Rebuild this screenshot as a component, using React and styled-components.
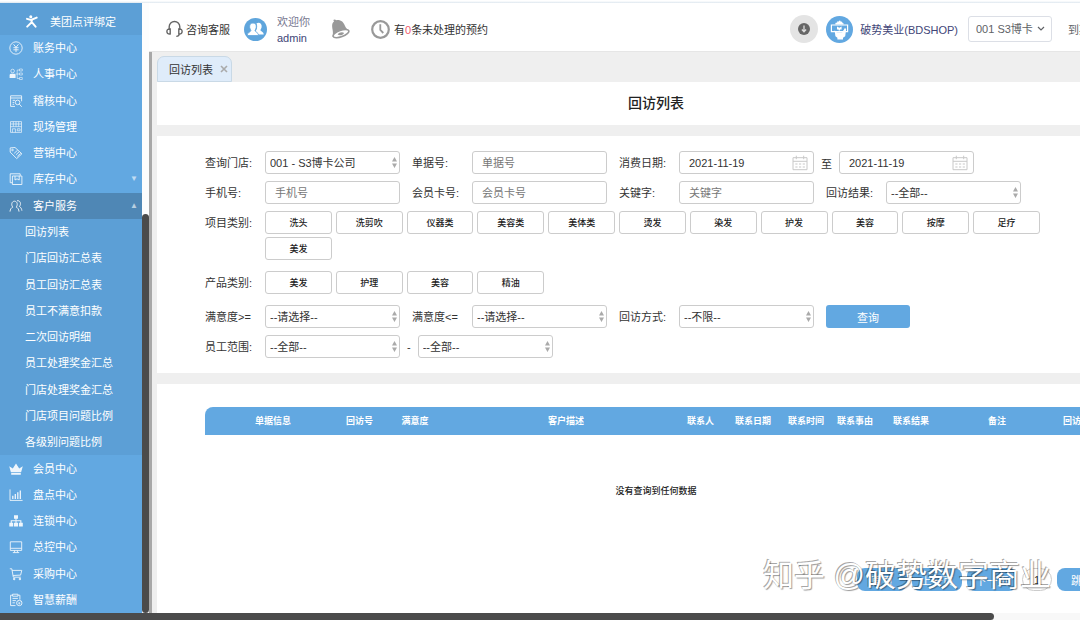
import React, { useState } from "react";
import styled, { createGlobalStyle } from "styled-components";

const GlobalStyle = createGlobalStyle`
  * {
    box-sizing: border-box;
  }
  body {
    margin: 0;
    background: #fff;
  }
  body, button, input, select {
    font-family: "Liberation Sans", "Noto Sans CJK SC", sans-serif;
    font-size: 11px;
    color: #333;
  }
`;

const Page = styled.div`
  display: flex;
  flex-direction: column;
  height: 100vh;
  min-height: 600px;
  overflow: hidden;
  position: relative;
`;

const TopLine = styled.div`
  flex: 0 0 3px;
  background: linear-gradient(#fff 1px, #dde6ee);
`;

const Body = styled.div`
  flex: 1;
  display: flex;
  min-height: 0;
`;

/* sidebar */

const Sidebar = styled.nav`
  flex: 0 0 142px;
  display: flex;
  flex-direction: column;
  background: #62a8e1;
`;

const BindLink = styled.a`
  flex: 0 0 32px;
  display: flex;
  align-items: center;
  gap: 12px;
  padding: 4px 0 0 26px;
  background: #5c9fd6;
  color: #fff;
  text-decoration: none;
`;

const Menu = styled.ul`
  flex: ${(p) => p.$rows};
  display: flex;
  flex-direction: column;
  list-style: none;
  margin: 0;
  padding: 0;
  background: ${(p) => (p.$sub ? "#5c9fd6" : "transparent")};
`;

const MenuItem = styled.li`
  flex: 1;
  display: flex;
  background: ${(p) => (p.$active ? "#4f87b5" : "transparent")};
`;

const MenuLink = styled.a`
  flex: 1;
  display: flex;
  align-items: center;
  gap: 10px;
  padding: 0 4px 0 ${(p) => (p.$sub ? "25px" : "9px")};
  color: #fff;
  line-height: 16px;
  text-decoration: none;
  white-space: nowrap;
  & > svg {
    flex: none;
    opacity: 0.9;
  }
`;

const Arrow = styled.span`
  margin-left: auto;
  font-size: 8px;
  opacity: 0.6;
`;

const ScrollTrack = styled.div`
  flex: 0 0 7px;
  display: flex;
  flex-direction: column;
  background: #fdfdfd;
`;

const ScrollSpace = styled.div`
  flex: 211;
`;

const ScrollThumb = styled.div`
  flex: 399;
  border-radius: 4px;
  background: #4b4b4b;
`;

const HScroll = styled.div`
  flex: 0 0 7px;
  background: #f8f8f8;
`;

const HThumb = styled.div`
  width: 92%;
  height: 7px;
  border-radius: 0 4px 4px 0;
  background: #4b4b4b;
`;

/* header */

const Main = styled.div`
  flex: 1;
  min-width: 0;
  display: flex;
  flex-direction: column;
`;

const Header = styled.header`
  flex: 0 0 49px;
  display: flex;
  align-items: center;
  padding: 4px 0 0 17px;
  border-bottom: 1px solid #e6e6e6;
  white-space: nowrap;
  overflow: hidden;
`;

const HeaderLink = styled.a`
  display: flex;
  align-items: center;
  gap: ${(p) => p.$gap || 4}px;
  margin-right: ${(p) => p.$space}px;
  color: ${(p) => p.$color || "#333"};
  text-decoration: none;
`;

const Welcome = styled.div`
  padding-top: 2px;
  color: #77778f;
  line-height: 16px;
  & strong {
    display: block;
    font-weight: normal;
    color: #414577;
  }
`;

const Count = styled.span`
  color: #f05a6e;
`;

const Account = styled.div`
  display: flex;
  align-items: center;
  margin-left: auto;
`;

const RoundButton = styled.button`
  display: flex;
  align-items: center;
  justify-content: center;
  width: 28px;
  height: 28px;
  margin-right: 8px;
  padding: 0;
  border: 0;
  border-radius: 50%;
  background: #e4e4e4;
`;

const Picker = styled.div`
  display: grid;
  align-items: center;
  flex: none;
  width: ${(p) => p.$width || 135}px;
  & > * {
    grid-area: 1 / 1;
  }
  & > svg {
    justify-self: end;
    margin-right: ${(p) => p.$inset || 2}px;
    pointer-events: none;
  }
`;

const ShopSelect = styled.select`
  appearance: none;
  width: 100%;
  height: 26px;
  padding: 0 7px;
  border: 1px solid #dcdfe6;
  border-radius: 3px;
  background: #fff;
  color: #606266;
`;

const HeaderTail = styled.span`
  flex: 0 0 12px;
  min-width: 0;
  margin-left: 16px;
  color: #606266;
`;

/* content */

const Content = styled.main`
  flex: 1;
  min-height: 0;
  display: flex;
  flex-direction: column;
  overflow: hidden;
  padding-left: 5px;
  border-left: 3px solid #a8a8a8;
  background: #efefef;
`;

const Tabs = styled.div`
  flex: 0 0 30px;
  display: flex;
  align-items: flex-end;
`;

const Tab = styled.div`
  display: flex;
  align-items: center;
  gap: 7px;
  width: 75px;
  height: 26px;
  padding-left: 11px;
  border: 1px solid #c9d9e6;
  border-radius: 7px 7px 0 0;
  background: #dfecfa;
  white-space: nowrap;
`;

const CloseButton = styled.button`
  display: flex;
  padding: 0;
  border: 0;
  background: none;
`;

const Sheet = styled.section`
  flex: ${(p) => (p.$grow ? 1 : "none")};
  min-width: 998px;
  margin-bottom: ${(p) => (p.$grow ? 0 : 11)}px;
  padding: ${(p) => p.$pad || "0"};
  background: #fff;
`;

const Title = styled.h1`
  margin: 0;
  font-size: 14px;
  font-weight: 500;
  line-height: 43px;
  text-align: center;
  color: #222;
`;

const Form = styled.form`
  display: flex;
  flex-direction: column;
  gap: 7px;
`;

const Row = styled.div`
  display: flex;
  align-items: flex-start;
  min-height: 23px;
  margin-bottom: ${(p) => (p.$loose ? 4 : 0)}px;
`;

const Field = styled.div`
  display: flex;
  align-items: center;
  flex: none;
  margin-right: 12px;
`;

const Label = styled.label`
  flex: 0 0 60px;
  padding-top: 1px;
  line-height: 22px;
  white-space: nowrap;
`;

const Divider = styled.span`
  margin: 0 7px;
`;

const Input = styled.input`
  width: 135px;
  height: 23px;
  padding: 0 9px;
  border: 1px solid #ccc;
  border-radius: 3px;
  background: #fff;
  outline: none;
  &::placeholder {
    color: #777;
  }
`;

const Select = styled.select`
  appearance: none;
  width: 100%;
  height: 23px;
  padding: 0 4px;
  border: 1px solid #ccc;
  border-radius: 3px;
  background: #fff;
`;

const Chips = styled.div`
  flex: 0 0 775px;
  display: grid;
  grid-template-columns: repeat(11, 1fr);
  gap: 3px 4px;
`;

const Chip = styled.button`
  height: 23px;
  padding: 0;
  border: 1px solid ${(p) => (p.$on ? "#62a8e1" : "#ccc")};
  border-radius: 3px;
  background: #fff;
  color: #222;
  font-size: 9px;
  font-weight: 500;
`;

const BlueButton = styled.button`
  flex: none;
  width: ${(p) => p.$width}px;
  height: 23px;
  padding: 0;
  border: 0;
  border-radius: ${(p) => p.$radius || 3}px;
  background: #62a8e1;
  color: #fff;
`;

const Table = styled.table`
  width: 100%;
  table-layout: fixed;
  border-collapse: collapse;
  border-radius: 8px 8px 0 0;
  overflow: hidden;
  font-size: 9px;
`;

const Th = styled.th`
  height: 28px;
  padding: 0 0 2px;
  background: #62a8e1;
  color: #fff;
  white-space: nowrap;
`;

const Empty = styled.td`
  height: 112px;
  padding: 0 0 2px;
  color: #222;
  font-weight: 500;
  text-align: center;
`;

const Pager = styled.div`
  display: flex;
  justify-content: flex-end;
  gap: 5px;
  margin-top: 21px;
`;

const PageInput = styled.input`
  width: 30px;
  height: 23px;
  padding: 0;
  border: 1px solid #ccc;
  border-radius: 12px;
  background: #fff;
  text-align: center;
`;

const Watermark = styled.div`
  position: absolute;
  right: 29px;
  bottom: 22px;
  color: #fff;
  font-size: 31px;
  line-height: 44px;
  white-space: pre;
  text-shadow: -1px -1px 0 rgba(0, 0, 0, 0.35), 1px 1px 1px rgba(0, 0, 0, 0.4);
  pointer-events: none;
`;

/* icons */

const Line = ({ children }) => (
  <svg
    width="14"
    height="14"
    viewBox="0 0 14 14"
    fill="none"
    stroke="#fff"
    strokeWidth="0.9"
    aria-hidden="true"
  >
    {children}
  </svg>
);

const Solid = ({ d }) => (
  <svg width="14" height="14" viewBox="0 0 14 14" fill="#fff" aria-hidden="true">
    <path d={d} />
  </svg>
);

const icons = {
  money: (
    <Line>
      <circle cx="7" cy="7" r="6.2" />
      <path d="M4.5 3.3 7 6.3l2.5-3M7 6.3v4.8M4.4 6.7h5.2M4.4 8.8h5.2" />
    </Line>
  ),
  staff: (
    <Line>
      <circle cx="3.6" cy="4" r="1.8" strokeWidth="0.7" />
      <path d="M.6 11V8q0-1.200 1.500-1.200h3Q6.600 6.800 6.600 8v3z" fill="#fff" stroke="none" />
      <path
        d="M8.2 3v8.500M8.200 3h2.300M6.600 7h3.900M8.200 11.500h2.300M10.500 2h2.800v2h-2.800zM10.500 6h2.800v2h-2.800zM10.500 10.500h2.800v2h-2.800z"
        strokeWidth="0.6"
      />
    </Line>
  ),
  audit: (
    <Line>
      <path d="M6 12.4H1.6V1.8h11v5.5M1.6 4h11M3.6 6.3h2.6M3.6 8.4h1.6M3.6 10.3h1.6" />
      <circle cx="8.6" cy="8.4" r="2.3" />
      <path d="m10.3 10.1 2.4 2.7" />
    </Line>
  ),
  shop: (
    <Line>
      <path
        d="M1.5 1.6h11v10.8h-11zM1.5 4h11M1.5 6.7h11M4.3 1.6v5M7 1.6v5M9.7 1.6v5M3.4 12.4V8.8h3v3.6M8.3 8.8h2.8v2H8.3z"
        strokeWidth="0.7"
      />
    </Line>
  ),
  tag: (
    <Line>
      <path d="M1.200 1.900v4.200l6.500 6.500 5.200-4.800L6 1.500z" />
      <circle cx="3.500" cy="4" r=".8" />
      <path d="m5.200 7.300 3.300-3M6.900 8.800l3.200-3M8.400 10.300l3.200-2.900" />
    </Line>
  ),
  stock: (
    <Line>
      <path d="M3.4 10.7H1.2V1.8h10v2M3.4 4h9.5v8.5H3.4zM6 4v4l2-1.2L10.2 8V4" />
    </Line>
  ),
  users: (
    <Line>
      <path
        d="M1 12.6c.2-2.5 1.3-3.8 2.8-4.5C1.9 6 2.7 2.2 5.5 2.2s3.6 3.8 1.7 5.9c1.6.7 2.6 2 2.8 4.500M8 1.800c3.200-.8 4.600 3.200 2.400 5.700 1.500.8 2.300 2.400 2.500 4.200"
        strokeWidth="1"
      />
    </Line>
  ),
  crown: (
    <Solid d="M.2 4.200 3.800 6.600 7 1.400l3.200 5.200 3.600-2.400-1.700 6.100H1.900zM2.200 11h9.600v1.700H2.200z" />
  ),
  chart: (
    <Line>
      <path d="M1 1.4v11h12.6" />
      <path d="M3.8 11V7.8M6.3 11V6M8.8 11V4.3M11.3 11V2.4" strokeWidth="1.3" />
    </Line>
  ),
  tree: (
    <Solid d="M5 1.200h4v3.600H7.500v1.500h4.900v2.500h1.400v3.700h-3.900V8.800h1.400V7.300H7.500v1.500H9v3.700H5V8.800h1.500V7.300H2.800v1.500h1.400v3.700H.3V8.800h1.400V6.300h4.800V4.800H5z" />
  ),
  monitor: (
    <Line>
      <path d="M1.3 1.8h11.4v8.6H1.3zM1.3 8.3h11.4M5.6 10.4v2M8.4 10.4v2M3.8 12.6h6.4" />
    </Line>
  ),
  cart: (
    <Line>
      <path d="M.8 1.8h2l1.5 8.4h7.5M3.1 3.4h9.7l-1.2 4.7-7.5.4" />
      <circle cx="5.2" cy="12" r=".8" fill="#fff" />
      <circle cx="10.9" cy="12" r=".8" fill="#fff" />
    </Line>
  ),
  pay: (
    <Line>
      <path d="M6.5 12.6H1.6V2.2h2M8.9 2.2h2v4.4M3.6 1.2h5.3v2H3.6zM3.5 5.4h5.4M3.5 7.6h3.4M3.5 9.8h2.4" />
      <circle cx="10.3" cy="10" r="2.7" />
      <path d="m9.2 8.6 1.1 1.3 1.1-1.3M10.3 9.9v1.8M9.2 10.4h2.2" strokeWidth=".6" />
    </Line>
  ),
};

const RunnerIcon = () => (
  <svg
    width="12"
    height="13"
    viewBox="0 0 12 13"
    fill="none"
    stroke="#fff"
    strokeWidth="1.9"
    strokeLinecap="round"
    aria-hidden="true"
  >
    <circle cx="4.8" cy="1.8" r="1.5" fill="#fff" stroke="none" />
    <path d="M1 3.800 5 5l5.700-2.400M6 5l-.8 2.700-4 4M6 7.300l3.600 4.400" />
  </svg>
);

const HeadsetIcon = () => (
  <svg width="17" height="18" viewBox="0 0 17 18" fill="none" stroke="#666" strokeWidth="1.4" aria-hidden="true">
    <path d="M3.2 9V6.8a5.3 5.3 0 0 1 10.6 0V9" />
    <path d="M4.2 9v5C2 14.3.9 13 .9 11.4S2 8.8 4.2 9zM12.8 9v5c2.2.3 3.3-1 3.3-2.6S15 8.8 12.8 9zM13.3 14c-.2 2-1.3 2.4-3 2.4" />
  </svg>
);

const MembersIcon = () => (
  <svg width="23" height="23" viewBox="0 0 23 23" aria-hidden="true">
    <circle cx="11.5" cy="11.5" r="11.5" fill="#5fa5dc" />
    <g fill="#fff">
      <path d="M12.4 5.5c2.8-1.9 5.9.3 5.2 3.7-.2 1.3-.9 1.9-1.2 2.8.2 1.5 3.3 1.5 3.3 4.5h-5.3c-.4-1.7-2.500-1.700-3-2.700.9-1.600 2.900-4.800 1-8.300z" />
      <path
        d="M9 5c2.8 0 3.7 2.3 3.2 4.6-.2 1.4-.9 2-1.2 3 .4 1.7 3.6 1.7 3.6 4.9H3.2c0-3.2 3.3-3.2 3.7-4.9-.3-1-.9-1.6-1.2-3C5.3 7.3 6.2 5 9 5z"
        stroke="#5fa5dc"
        strokeWidth=".8"
      />
    </g>
  </svg>
);

const BellIcon = () => (
  <svg width="19" height="20" viewBox="0 0 19 20" aria-hidden="true">
    <path
      d="M2.300 1.100c.9-1.100 2.300-.7 2.900.1 4.800-.6 7.300 2 8.700 5.600.9 2.200 2.300 3.400 4 4.500L1.500 17.500c.6-2.500.5-4.200.1-6.700C1 7.300.6 4.500 3 2.600z"
      fill="#999"
    />
    <ellipse
      cx="10"
      cy="14.600"
      rx="8.300"
      ry="3.200"
      transform="rotate(-20 10 14.600)"
      fill="#fff"
      stroke="#999"
      strokeWidth="1.600"
    />
    <path d="M6.600 15.600c1.400-2.200 4.500-2.900 6.500-1.700-1 2.200-4.500 3.200-6.500 1.700z" fill="#999" />
  </svg>
);

const ClockIcon = () => (
  <svg width="19" height="19" viewBox="0 0 19 19" fill="none" stroke="#999" aria-hidden="true">
    <circle cx="9.5" cy="9.5" r="8.3" strokeWidth="2.2" />
    <path d="M9.3 4.3V10l3 3" strokeWidth="1.8" />
  </svg>
);

const DownloadIcon = () => (
  <svg width="12" height="12" viewBox="0 0 12 12" fill="none" aria-hidden="true">
    <circle cx="6" cy="6" r="6" fill="#666" />
    <path d="M6 2.5v6M3.9 6.500 6 8.700l2.100-2.200" stroke="#ddd" strokeWidth="1.3" />
  </svg>
);

const BrandIcon = () => (
  <svg width="27" height="27" viewBox="0 0 27 27" aria-hidden="true">
    <circle cx="13.5" cy="13.5" r="13.5" fill="#62a8e1" />
    <path d="M5.400 9h16.200v6.600H5.400z" fill="none" stroke="#fff" strokeWidth="1.200" />
    <g fill="#fff">
      <path d="M9.400 8.600V7q.9-1.200 1.700 0V5.800q.9-1.100 1.800 0V5q.9-1 1.800 0v.9q.9-.9 1.700.3v1q1-.5 1.200.6v.8z" />
      <path d="M8.600 14.200l2.200 2.100h5.400l2.700-4.300 1.300 1-1 7.300-2.200 1.500v1.600h-5.600v-1.600l-2-1.600z" />
      <path d="m11 10.400 2.300 1.400 2.300-1.400v3.200h-1.600v1h-1.400v-1H11z" />
    </g>
  </svg>
);

const SortArrows = () => (
  <svg width="7" height="11" viewBox="0 0 7 11" fill="#aaa" aria-hidden="true">
    <path d="M3.5 0 6 4.500H1zM3.500 11 6 6.500H1z" />
  </svg>
);

const CalendarIcon = () => (
  <svg width="16" height="16" viewBox="0 0 16 16" fill="none" stroke="#c8c8c8" aria-hidden="true">
    <path d="M1 2.700h14v12H1zM1 6.300h14M4.300.7v3.500M11.700.7v3.500" />
    <path d="M3.300 9h2.200M7 9h2.200M10.700 9h2.200M3.300 12h2.200M7 12h2.200M10.700 12h2.200" strokeWidth="1.200" />
  </svg>
);

/* data */

const topMenu = [
  ["money", "账务中心"],
  ["staff", "人事中心"],
  ["audit", "稽核中心"],
  ["shop", "现场管理"],
  ["tag", "营销中心"],
  ["stock", "库存中心", "▼"],
  ["users", "客户服务", "▲"],
];

const subMenu = [
  "回访列表",
  "门店回访汇总表",
  "员工回访汇总表",
  "员工不满意扣款",
  "二次回访明细",
  "员工处理奖金汇总",
  "门店处理奖金汇总",
  "门店项目问题比例",
  "各级别问题比例",
];

const bottomMenu = [
  ["crown", "会员中心"],
  ["chart", "盘点中心"],
  ["tree", "连锁中心"],
  ["monitor", "总控中心"],
  ["cart", "采购中心"],
  ["pay", "智慧薪酬"],
];

const services = ["洗头", "洗剪吹", "仪器类", "美容类", "美体类", "烫发", "染发", "护发", "美容", "按摩", "足疗", "美发"];
const products = ["美发", "护理", "美容", "精油"];

const columns = [
  ["单据信息", 136],
  ["回访号", 37],
  ["满意度", 74],
  ["客户描述", 228],
  ["联系人", 41],
  ["联系日期", 64],
  ["联系时间", 42],
  ["联系事由", 56],
  ["联系结果", 56],
  ["备注", 116],
  ["回访状态", 52],
];

const MenuList = ({ items }) => (
  <Menu $rows={items.length}>
    {items.map(([icon, text, arrow]) => (
      <MenuItem key={text} $active={arrow === "▲"}>
        <MenuLink href="#">
          {icons[icon]}
          {text}
          {arrow && <Arrow>{arrow}</Arrow>}
        </MenuLink>
      </MenuItem>
    ))}
  </Menu>
);

const SelectBox = ({ id, label, text }) => (
  <Picker>
    <Select id={id} aria-label={label}>
      <option>{text}</option>
    </Select>
    <SortArrows />
  </Picker>
);

const DateBox = ({ id, label }) => {
  const [date, setDate] = useState("2021-11-19");
  return (
    <Picker $inset={6}>
      <Input id={id} aria-label={label} value={date} onChange={(e) => setDate(e.target.value)} />
      <CalendarIcon />
    </Picker>
  );
};

const ChipGroup = ({ items }) => {
  const [picked, setPicked] = useState([]);
  const toggle = (item) =>
    setPicked(picked.includes(item) ? picked.filter((p) => p !== item) : [...picked, item]);

  return (
    <Chips>
      {items.map((item) => (
        <Chip key={item} type="button" $on={picked.includes(item)} onClick={() => toggle(item)}>
          {item}
        </Chip>
      ))}
    </Chips>
  );
};

const TopBar = () => (
  <Header>
    <HeaderLink href="#" $gap={3} $space={14}>
      <HeadsetIcon />
      咨询客服
    </HeaderLink>
    <HeaderLink as="div" $gap={10} $space={21}>
      <MembersIcon />
      <Welcome>
        欢迎你<strong>admin</strong>
      </Welcome>
    </HeaderLink>
    <HeaderLink href="#" aria-label="通知" $space={21}>
      <BellIcon />
    </HeaderLink>
    <HeaderLink href="#" $space={20}>
      <ClockIcon />
      <span>
        有<Count>0</Count>条未处理的预约
      </span>
    </HeaderLink>
    <Account>
      <RoundButton type="button" aria-label="下载">
        <DownloadIcon />
      </RoundButton>
      <HeaderLink href="#" $gap={7} $space={10} $color="#414577">
        <BrandIcon />
        破势美业(BDSHOP)
      </HeaderLink>
      <Picker $width={84} $inset={7}>
        <ShopSelect aria-label="门店">
          <option>001 S3博卡</option>
        </ShopSelect>
        <svg width="8" height="6" viewBox="0 0 8 6" fill="none" stroke="#606266" strokeWidth="1.2">
          <path d="m1 1 3 3 3-3" />
        </svg>
      </Picker>
    </Account>
    <HeaderTail>到期</HeaderTail>
  </Header>
);

const FilterForm = () => (
  <Form onSubmit={(e) => e.preventDefault()}>
    <Row>
      <Field>
        <Label htmlFor="store">查询门店:</Label>
        <SelectBox id="store" text="001 - S3博卡公司" />
      </Field>
      <Field>
        <Label htmlFor="bill">单据号:</Label>
        <Input id="bill" placeholder="单据号" />
      </Field>
      <Field>
        <Label htmlFor="from">消费日期:</Label>
        <DateBox id="from" />
        <Divider>至</Divider>
        <DateBox label="结束日期" />
      </Field>
    </Row>
    <Row>
      <Field>
        <Label htmlFor="phone">手机号:</Label>
        <Input id="phone" placeholder="手机号" />
      </Field>
      <Field>
        <Label htmlFor="card">会员卡号:</Label>
        <Input id="card" placeholder="会员卡号" />
      </Field>
      <Field>
        <Label htmlFor="keyword">关键字:</Label>
        <Input id="keyword" placeholder="关键字" />
      </Field>
      <Field>
        <Label htmlFor="result">回访结果:</Label>
        <SelectBox id="result" text="--全部--" />
      </Field>
    </Row>
    <Row $loose>
      <Label as="span">项目类别:</Label>
      <ChipGroup items={services} />
    </Row>
    <Row $loose>
      <Label as="span">产品类别:</Label>
      <ChipGroup items={products} />
    </Row>
    <Row>
      <Field>
        <Label htmlFor="min">满意度&gt;=</Label>
        <SelectBox id="min" text="--请选择--" />
      </Field>
      <Field>
        <Label htmlFor="max">满意度&lt;=</Label>
        <SelectBox id="max" text="--请选择--" />
      </Field>
      <Field>
        <Label htmlFor="way">回访方式:</Label>
        <SelectBox id="way" text="--不限--" />
      </Field>
      <BlueButton type="submit" $width={84}>
        查询
      </BlueButton>
    </Row>
    <Row>
      <Field>
        <Label htmlFor="staff">员工范围:</Label>
        <SelectBox id="staff" text="--全部--" />
        <Divider>-</Divider>
        <SelectBox label="员工范围止" text="--全部--" />
      </Field>
    </Row>
  </Form>
);

const ResultTable = () => (
  <Table>
    <colgroup>
      {columns.map(([name, width]) => (
        <col key={name} width={width} />
      ))}
    </colgroup>
    <thead>
      <tr>
        {columns.map(([name]) => (
          <Th key={name}>{name}</Th>
        ))}
      </tr>
    </thead>
    <tbody>
      <tr>
        <Empty colSpan={columns.length}>没有查询到任何数据</Empty>
      </tr>
    </tbody>
  </Table>
);

const App = () => {
  const [page, setPage] = useState("1");

  return (
    <Page>
      <GlobalStyle />
      <TopLine />
      <Body>
        <Sidebar>
          <BindLink href="#">
            <RunnerIcon />
            美团点评绑定
          </BindLink>
          <MenuList items={topMenu} />
          <Menu $rows={subMenu.length} $sub>
            {subMenu.map((text) => (
              <MenuItem key={text}>
                <MenuLink href="#" $sub>
                  {text}
                </MenuLink>
              </MenuItem>
            ))}
          </Menu>
          <MenuList items={bottomMenu} />
        </Sidebar>
        <ScrollTrack>
          <ScrollSpace />
          <ScrollThumb />
        </ScrollTrack>
        <Main>
          <TopBar />
          <Content>
            <Tabs>
              <Tab>
                回访列表
                <CloseButton type="button" aria-label="关闭">
                  <svg width="8" height="8" viewBox="0 0 8 8" stroke="#aaa" strokeWidth="1.6">
                    <path d="m1 1 6 6M7 1 1 7" />
                  </svg>
                </CloseButton>
              </Tab>
            </Tabs>
            <Sheet>
              <Title>回访列表</Title>
            </Sheet>
            <Sheet $pad="15px 0 15px 48px">
              <FilterForm />
            </Sheet>
            <Sheet $pad="23px 48px 0" $grow>
              <ResultTable />
              <Pager>
                <BlueButton type="button" $width={50} $radius={8}>
                  首页
                </BlueButton>
                <BlueButton type="button" $width={50} $radius={8}>
                  上一页
                </BlueButton>
                <BlueButton type="button" $width={50} $radius={8}>
                  下一页
                </BlueButton>
                <PageInput aria-label="页码" value={page} onChange={(e) => setPage(e.target.value)} />
                <BlueButton type="button" $width={50} $radius={8}>
                  跳转
                </BlueButton>
              </Pager>
            </Sheet>
          </Content>
        </Main>
      </Body>
      <HScroll>
        <HThumb />
      </HScroll>
      <Watermark>知乎 @破势数字商业</Watermark>
    </Page>
  );
};

export default App;
